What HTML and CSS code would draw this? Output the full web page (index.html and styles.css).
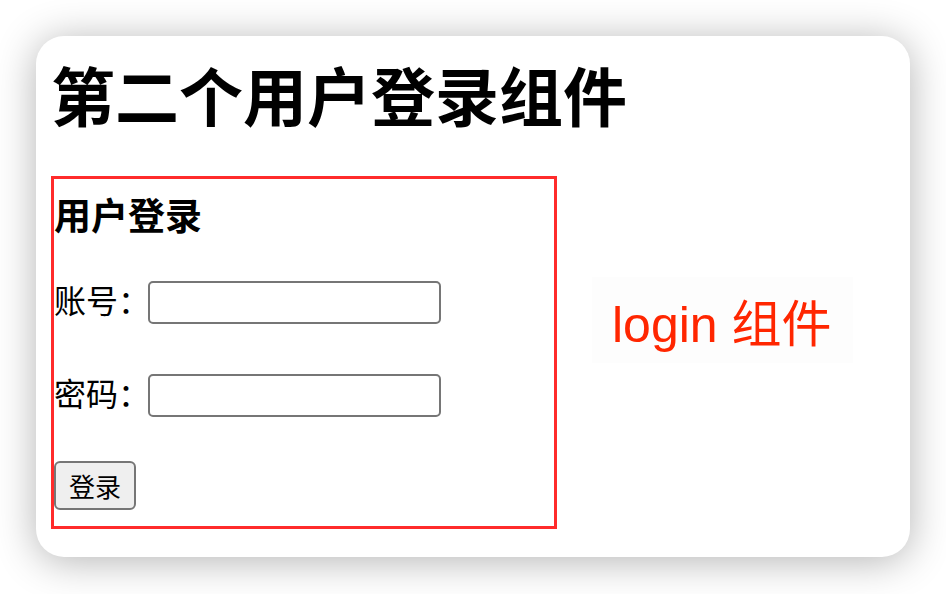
FILE: index.html
```html
<!DOCTYPE html>
<html lang="zh-CN">
<head>
    <meta charset="UTF-8">
    <meta name="viewport" content="width=device-width, initial-scale=1.0">
    <title>第二个用户登录组件</title>
    <link rel="stylesheet" href="styles.css">
</head>
<body>
    <div class="card">
        <h1 class="title">第二个用户登录组件</h1>

        <div class="row">
            <div class="login-box">
                <h3 class="login-title">用户登录</h3>
                <div class="field">
                    <label class="field-label" for="account">账号：</label>
                    <input class="field-input" type="text" id="account">
                </div>
                <div class="field">
                    <label class="field-label" for="password">密码：</label>
                    <input class="field-input" type="password" id="password">
                </div>
                <button class="login-btn">登录</button>
            </div>

            <div class="component-tag">login 组件</div>
        </div>
    </div>
</body>
</html>
```

FILE: styles.css
```css
* {
    margin: 0;
    padding: 0;
    box-sizing: border-box;
}

body {
    font-family: "Noto Sans CJK SC", "Noto Sans", sans-serif;
    background: #ffffff;
    color: #000;
    width: 946px;
    height: 594px;
    overflow: hidden;
}

.card {
    margin: 36px 0 0 36px;
    width: 874px;
    height: 521px;
    padding: 19px 15px 0;
    background: #fff;
    border-radius: 28px;
    box-shadow: 0 4px 40px rgba(0, 0, 0, 0.3);
}

.title {
    font-size: 64px;
    line-height: 76px;
    font-weight: bold;
}

.row {
    display: flex;
    align-items: flex-start;
    margin-top: 45px;
}

.login-box {
    width: 506px;
    border: 3px solid #ff2b2b;
    padding: 0 0 16px 0;
}

.login-title {
    font-size: 37px;
    line-height: 44px;
    font-weight: bold;
    margin: 13px 0 45px;
}

.field {
    display: flex;
    align-items: center;
    height: 43px;
    margin-bottom: 50px;
}

.field:nth-of-type(2) {
    margin-bottom: 44px;
}

.field-label {
    width: 94px;
    font-size: 32px;
    line-height: 1;
    padding-bottom: 8px;
    white-space: nowrap;
}

.field-input {
    width: 293px;
    height: 43px;
    border: 2px solid #767676;
    border-radius: 5px;
    background: #fff;
}

.login-btn {
    display: block;
    height: 49px;
    padding: 0 13px;
    font-family: inherit;
    font-size: 26px;
    line-height: 1;
    color: #000;
    background: #efefef;
    border: 2px solid #767676;
    border-radius: 6px;
}

.component-tag {
    margin: 101px 0 0 35px;
    width: 261px;
    height: 86px;
    padding-left: 20px;
    display: flex;
    align-items: center;
    background: #fdfdfd;
    color: #ff2600;
    font-family: "Liberation Sans", "Noto Sans CJK SC", sans-serif;
    font-size: 50px;
    white-space: nowrap;
}
```
